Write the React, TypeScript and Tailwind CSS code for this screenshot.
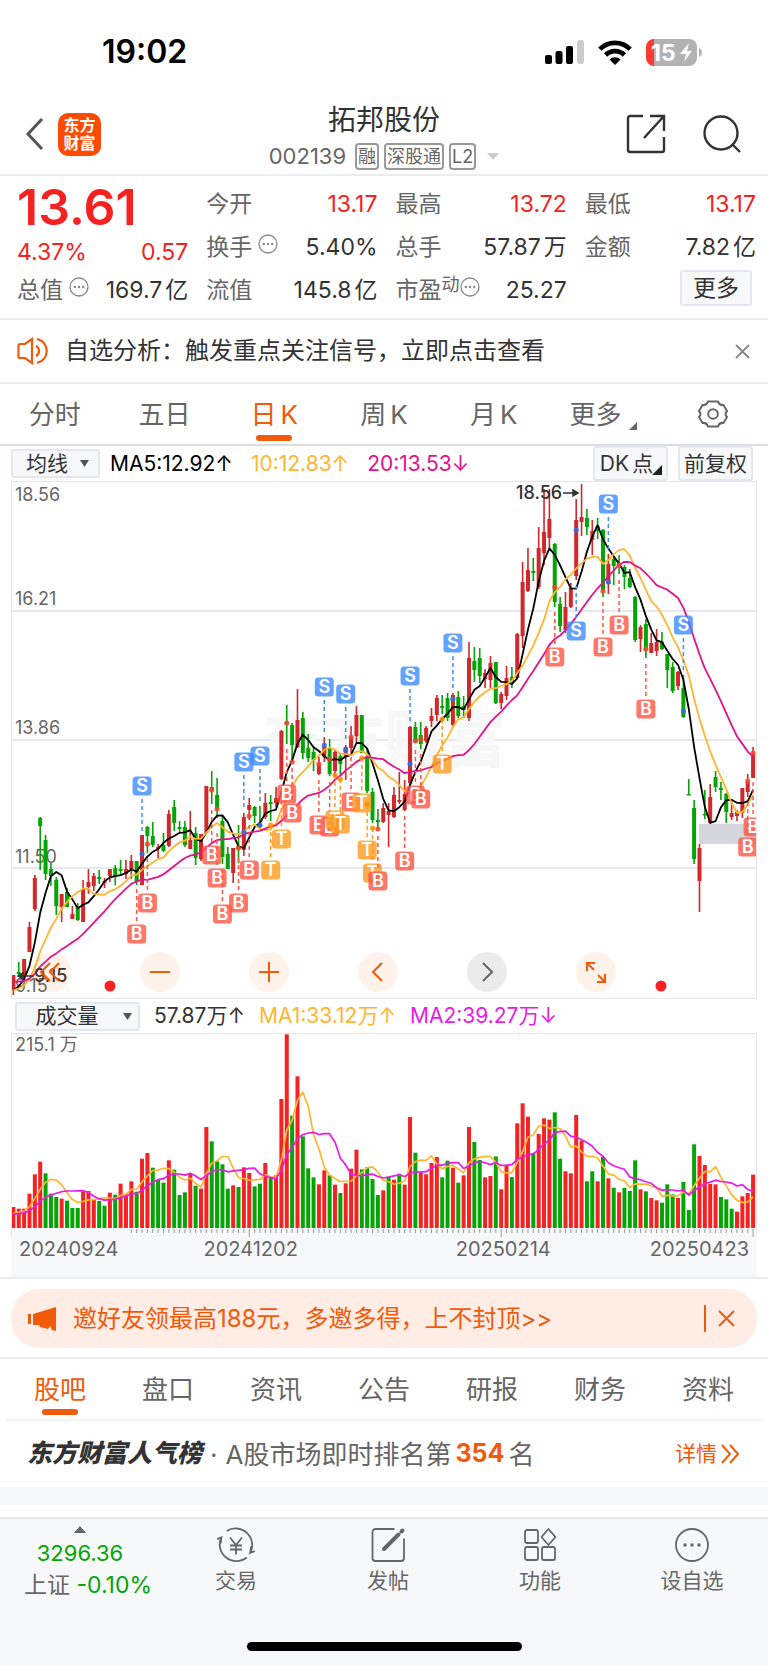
import React from 'react';

// [high, low, bodyTop, bodyBottom], negative high marks a falling day
const CANDLES: [number, number, number, number][] = [
  [493, 513, 493, 508], [-480, 494, 490, 492], [477, 498, 477, 494], [440, 470, 445, 470], [393, 429, 396, 427],
  [-335, 388, 336, 344], [-353, 398, 358, 392], [-381, 404, 387, 394], [-395, 433, 398, 424], [412, 440, 412, 425],
  [-406, 425, 410, 425], [424, 437, 432, 437], [-421, 439, 425, 438], [398, 440, 407, 440], [387, 412, 400, 405],
  [391, 409, 394, 404], [-388, 402, 395, 397], [396, 406, 399, 401], [387, 400, 387, 394], [-383, 403, 386, 394],
  [-378, 393, 387, 389], [378, 397, 387, 392], [373, 397, 379, 387], [-379, 403, 379, 400], [353, 403, 353, 403],
  [-344, 371, 345, 354], [-340, 365, 354, 363], [362, 376, 365, 367], [-351, 370, 363, 369], [328, 365, 332, 364],
  [-318, 349, 325, 341], [-339, 350, 345, 347], [-339, 365, 345, 363], [329, 367, 358, 367], [-345, 383, 351, 376],
  [352, 379, 352, 377], [304, 351, 304, 351], [-289, 322, 305, 309], [-296, 336, 313, 327], [-334, 382, 339, 375],
  [-365, 387, 372, 387], [366, 401, 366, 391], [-343, 381, 364, 367], [331, 374, 335, 368], [316, 338, 323, 328],
  [-324, 341, 325, 334], [-324, 346, 342, 345], [311, 337, 321, 335], [-313, 339, 320, 322], [305, 325, 316, 321],
  [248, 298, 249, 297], [-223, 262, 240, 242], [-241, 280, 243, 263], [207, 266, 238, 265], [-230, 277, 236, 271],
  [-252, 280, 266, 276], [-264, 289, 270, 278], [275, 293, 282, 292], [255, 280, 264, 275], [-257, 294, 266, 292],
  [268, 295, 270, 289], [-271, 293, 274, 282], [263, 298, 265, 275], [244, 271, 255, 266], [224, 260, 233, 254],
  [-233, 271, 233, 271], [-266, 311, 276, 309], [-306, 341, 310, 338], [-327, 348, 338, 340], [321, 341, 326, 340],
  [321, 365, 329, 333], [305, 336, 313, 335], [290, 322, 318, 320], [298, 329, 312, 328], [244, 303, 245, 301],
  [-240, 261, 245, 260], [-240, 267, 253, 262], [244, 261, 246, 259], [226, 245, 234, 239], [213, 239, 216, 233],
  [-213, 232, 224, 226], [-211, 239, 216, 236], [211, 244, 213, 243], [-209, 236, 215, 234], [-214, 236, 224, 228],
  [160, 239, 176, 236], [-165, 200, 179, 188], [-166, 201, 176, 194], [187, 206, 191, 197], [174, 206, 181, 198],
  [-180, 222, 180, 221], [210, 227, 212, 221], [184, 218, 196, 214], [-185, 206, 195, 201], [151, 197, 152, 196],
  [80, 166, 100, 154], [66, 110, 88, 109], [-76, 99, 89, 91], [45, 107, 66, 105], [7, 83, 50, 71],
  [7, 66, 37, 56], [-61, 125, 62, 120], [-115, 150, 122, 144], [110, 151, 125, 148], [101, 126, 106, 125],
  [17, 98, 38, 94], [2, 54, 35, 40], [-27, 53, 36, 45], [38, 73, 49, 58], [-36, 57, 44, 49],
  [-47, 115, 48, 108], [72, 112, 82, 102], [-75, 103, 77, 84], [-73, 92, 81, 85], [-83, 107, 85, 95],
  [-87, 106, 96, 105], [-114, 160, 115, 158], [143, 170, 145, 157], [-137, 176, 142, 168], [151, 171, 161, 171],
  [147, 174, 160, 169], [-150, 168, 160, 167], [-172, 206, 172, 188], [-180, 211, 185, 209], [189, 208, 190, 204],
  [-193, 236, 206, 235], [-297, 313, 312, 313], [-318, 382, 326, 377], [362, 430, 366, 399], [-308, 337, 332, 333],
  [302, 342, 315, 341], [-289, 310, 295, 305], [-300, 318, 306, 308], [-311, 341, 312, 330], [318, 338, 331, 335],
  [328, 339, 330, 334], [306, 336, 306, 331], [292, 315, 300, 310], [265, 296, 272, 296],
];

// negative = green bar
const VOLUMES = [
  63, 58, 58, 103, 161, 199, -164, -103, -93, 88, -82, -60, -60, 109, 111, 85, -81, -67, 106, -100,
  133, 101, 140, -109, 208, 225, -181, -145, -136, 203, -175, -99, -107, 163, -127, 118, 303, -260, -200, -191,
  -118, 128, -123, 182, 165, -125, -133, 195, -150, 158, 387, 581, -337, 455, -275, -179, -152, 131, 173, -158,
  130, -105, 134, 178, 235, -176, -182, -147, -99, 113, -154, 145, -163, 130, 333, -226, 165, 161, 195, 213,
  -152, -202, 181, -136, 158, 303, -258, -204, 152, 156, -215, 116, 187, -153, 314, 374, 334, -224, 282, 329,
  325, -347, -208, 170, 164, 339, 262, -140, -170, 140, -213, 149, -121, 107, -120, -111, -203, 116, -110, 90,
  83, -76, -131, -101, 90, -138, -54, -251, 216, 189, 132, 131, -93, -86, -58, 49, 95, 105, 160,
];

type MarkerKind = 'S' | 'B' | 'T';

// [kind, candle index, marker y, dot y]
const MARKERS: [MarkerKind, number, number, number?][] = [
  ['S', 24, 304, 372], ['B', 23, 452], ['B', 25, 421, 362], ['B', 37, 373, 308], ['B', 38, 396, 327],
  ['B', 39, 432], ['B', 42, 421, 366], ['S', 43, 280, 350], ['B', 44, 388, 334], ['S', 46, 274, 343],
  ['T', 48, 388, 343], ['T', 50, 357], ['B', 51, 312, 241], ['B', 52, 331, 280], ['B', 57, 343, 282],
  ['S', 58, 205, 263], ['B', 59, 345, 277], ['T', 60, 338, 293], ['T', 61, 342, 297], ['S', 62, 212, 268],
  ['B', 63, 320, 255], ['T', 65, 321, 276], ['T', 66, 368, 322], ['T', 67, 391, 346], ['B', 68, 399, 347],
  ['B', 73, 379], ['S', 74, 194, 282], ['B', 75, 313, 259], ['B', 76, 317, 257], ['T', 80, 282, 237],
  ['S', 82, 161, 217], ['B', 101, 175, 105], ['S', 105, 149, 48], ['B', 110, 165, 109], ['S', 111, 22, 100],
  ['B', 113, 143, 83], ['B', 118, 227, 167], ['S', 125, 143, 229], ['B', 138, 345, 271], ['B', 137, 365, 299],
];

const MARKER_COLORS: Record<MarkerKind, { box: string; dot: string }> = {
  S: { box: '#3d8bff', dot: '#2f6fe8' },
  B: { box: '#ff5542', dot: '#f0492b' },
  T: { box: '#ff9a1f', dot: '#ff8a00' },
};

const RED = '#d0282b';
const GREEN = '#05a405';
const STEP = 5.36;
const xAt = (i: number) => 13.4 + i * STEP;

const average = (values: number[], span: number, history: number[]) => {
  const all = [...history, ...values];
  return values.map((_, i) => {
    const end = i + history.length + 1;
    return all.slice(end - span, end).reduce((a, b) => a + b, 0) / span;
  });
};

const toPoints = (ys: number[]) => ys.map((y, i) => `${xAt(i).toFixed(1)},${y.toFixed(1)}`).join(' ');

const closes = CANDLES.map(([high, , top, bottom]) => (high < 0 ? bottom : top));
const earlierCloses = [...Array(10).fill(491), ...Array(5).fill(508), ...Array(4).fill(512)];
const volumeTops = VOLUMES.map((v) => 194 - Math.abs(v) / 3);
const earlierVolumes = Array(9).fill(181);

const PriceChart = () => (
  <svg viewBox="12 0 744 516" className="block w-full" role="img" aria-label="日K">
    {[129, 258, 386].map((y) => (
      <line key={y} x1="11" x2="757" y1={y} y2={y} stroke="#e6e9f0" strokeWidth="2" />
    ))}
    <text x="262" y="280" fontSize="61" fontWeight="900" fill="#f7f7f8">东方财富</text>
    <rect x="699" y="342" width="58" height="20" fill="#d3d6db" />
    <g fontSize="18" fill="#666">
      <text x="15" y="19">18.56</text>
      <text x="15" y="123">16.21</text>
      <text x="15" y="252">13.86</text>
      <text x="15" y="381">11.50</text>
      <text x="15" y="510">9.15</text>
    </g>
    {CANDLES.map(([high, low, top, bottom], i) => (
      <g key={i} fill={high < 0 ? GREEN : RED}>
        <rect x={xAt(i) - 0.8} y={Math.abs(high)} width="1.6" height={low - Math.abs(high)} />
        <rect x={xAt(i) - 2} y={top} width="4" height={Math.max(bottom - top, 1.5)} />
      </g>
    ))}
    <g fill="none" strokeWidth="1.8" strokeLinejoin="round">
      <polyline points={toPoints(average(closes, 5, earlierCloses))} stroke="#000" />
      <polyline points={toPoints(average(closes, 10, earlierCloses))} stroke="#ffb62e" />
      <polyline points={toPoints(average(closes, 20, earlierCloses))} stroke="#e3118c" />
    </g>
    {MARKERS.map(([kind, i, y, dot]) => {
      const color = MARKER_COLORS[kind];
      const dir = dot && dot > y ? 1 : -1;
      return (
        <g key={`${kind}${i}`}>
          <line x1={xAt(i)} x2={xAt(i)} y1={y + dir * 13} y2={y + dir * 45} stroke={color.box} strokeWidth="1.5" strokeDasharray="4 3" />
          {dot && <circle cx={xAt(i)} cy={dot} r="2.6" fill={color.dot} fillOpacity="0.85" />}
          <rect x={xAt(i) - 9.5} y={y - 9.5} width="19" height="19" rx="3.5" fill={color.box} fillOpacity="0.8" />
          <text x={xAt(i)} y={y + 6} textAnchor="middle" fontSize="18" fontWeight="600" fill="#fff">{kind}</text>
        </g>
      );
    })}
    <g fontSize="18" fontWeight="500" fill="#333">
      <text x="516" y="17">18.56</text>
      <text x="34" y="500">9.15</text>
    </g>
    <g stroke="#333" strokeWidth="1.5" fill="#333">
      <path d="M563 11h11M573 8l5 3-5 3zM34 494H22M23 491l-5 3 5 3z" />
    </g>
    <circle cx="110" cy="504" r="5.5" fill="#f62222" />
    <circle cx="661" cy="504" r="5.5" fill="#f62222" />
  </svg>
);

const VolumeChart = () => (
  <svg viewBox="12 0 744 203" className="block w-full" role="img" aria-label="成交量">
    <rect x="11" y="194" width="746" height="9" fill="#f7f8fa" />
    <text x="15" y="17" fontSize="18" fill="#666">215.1 万</text>
    {VOLUMES.map((v, i) => (
      <rect key={i} x={xAt(i) - 2} y={volumeTops[i]} width="4" height={194 - volumeTops[i]} fill={v < 0 ? GREEN : '#f62222'} />
    ))}
    <g stroke="#999" strokeWidth="1">
      {VOLUMES.map((_, i) => {
        if (i < 22) return null;
        return <line key={i} x1={xAt(i)} x2={xAt(i)} y1="195" y2={[44, 91, 138].includes(i) ? 203 : 199} />;
      })}
    </g>
    <g fill="none" strokeWidth="1.7" strokeLinejoin="round">
      <polyline points={toPoints(average(volumeTops, 5, earlierVolumes))} stroke="#ffb62e" />
      <polyline points={toPoints(average(volumeTops, 10, earlierVolumes))} stroke="#e81be8" />
    </g>
  </svg>
);

const StatusBar = () => (
  <div className="flex h-[90px] items-center justify-between pt-3.5 pr-[66px] pl-[102px]">
    <span className="text-[32px] leading-9 font-semibold text-black">19:02</span>
    <div className="flex items-center gap-3.5">
      <svg width="39" height="24" viewBox="0 0 39 24">
        <rect x="0" y="15" width="7" height="9" rx="2" />
        <rect x="10.500" y="11" width="7" height="13" rx="2" />
        <rect x="21" y="6" width="7" height="18" rx="2" />
        <rect x="32" y="0" width="7" height="24" rx="2" fill="#ccc" />
      </svg>
      <svg width="34" height="25" viewBox="0 0 34 25" fill="none" stroke="#000" strokeWidth="4.600">
        <path d="M1.800 9.200a21.500 21.500 0 0 1 30.400 0M7.600 15a13.300 13.300 0 0 1 18.800 0" />
        <path d="M17 25l-5.500-5.600a7.800 7.800 0 0 1 11 0z" fill="#000" stroke="none" />
      </svg>
      <svg width="56" height="27" viewBox="0 0 56 27">
        <path d="M8 0h35a8 8 0 0 1 8 8v11a8 8 0 0 1-8 8H8z" fill="#b3b3b3" />
        <path d="M8 0v27a8 8 0 0 1-8-8V8a8 8 0 0 1 8-8z" fill="#ff3b30" />
        <path d="M53 9c4 1 4 8 0 9z" fill="#b3b3b3" />
        <text x="5" y="22" fontSize="23" fontWeight="700" fill="#fff">15</text>
        <path d="M43 4L34 15h6l-2 8 8-11h-5z" fill="#fff" />
      </svg>
    </div>
  </div>
);

const Header = () => (
  <header className="relative flex h-[86px] items-center justify-between border-b-2 border-[#ececee] pt-1 pr-[27px] pl-[25px]">
    <div className="flex items-center gap-3.5">
      <button type="button" aria-label="返回">
        <svg width="19" height="32" viewBox="0 0 19 32" fill="none" stroke="#555" strokeWidth="3">
          <path d="M17 1L3 16l14 15" />
        </svg>
      </button>
      <a href="#home" className="flex h-[43px] w-[43px] flex-col items-center justify-center rounded-[10px] bg-[#ff4a00] text-[16px] leading-[18px] font-bold text-white">
        <span>东方</span>
        <span>财富</span>
      </a>
    </div>
    <div className="absolute inset-x-40 top-[10px] flex flex-col items-center">
      <h1 className="text-[28px] leading-10 text-[#333]">拓邦股份</h1>
      <div className="flex items-center gap-[5px] text-[22px] leading-8 text-[#666]">
        <span className="mr-1">002139</span>
        {['融', '深股通', 'L2'].map((tag) => (
          <span key={tag} className="h-[27px] rounded-[4px] border-2 border-[#999] px-px text-[18px] leading-6">{tag}</span>
        ))}
        <svg width="12" height="7" className="ml-1.5"><path d="M0 0h12L6 7z" fill="#ccc" /></svg>
      </div>
    </div>
    <div className="flex items-center gap-[37px]">
      <button type="button" aria-label="分享">
        <svg width="40" height="40" viewBox="0 0 40 40" fill="none" stroke="#333" strokeWidth="2.400">
          <path d="M17 2H4a2 2 0 0 0-2 2v32a2 2 0 0 0 2 2h32a2 2 0 0 0 2-2V23M24 2h14v15M38 2L18 24" />
        </svg>
      </button>
      <button type="button" aria-label="搜索">
        <svg width="38" height="40" viewBox="0 0 38 40" fill="none" stroke="#333" strokeWidth="2.400">
          <circle cx="18" cy="19" r="16.500" />
          <path d="M29 30l8 8" />
        </svg>
      </button>
    </div>
  </header>
);

const InfoDots = () => (
  <svg width="20" height="20" viewBox="0 0 20 20" className="mb-2 block" fill="#888">
    <circle cx="10" cy="10" r="9" fill="none" stroke="#888" strokeWidth="1.300" />
    <circle cx="5.800" cy="10" r="1.200" />
    <circle cx="10" cy="10" r="1.200" />
    <circle cx="14.200" cy="10" r="1.200" />
  </svg>
);

interface StatProps {
  label: string;
  value: string;
  unit?: string;
  up?: boolean;
  info?: boolean;
  sup?: string;
}

const Stat: React.FC<StatProps> = ({ label, value, unit, up, info, sup }) => (
  <div className="flex h-[43px] items-center justify-between">
    <dt className="flex items-center text-[#666]">
      {label}
      {sup && <span className="mb-3 text-[18px] leading-5">{sup}</span>}
      {info && <span className={sup ? '' : 'ml-1.5'}><InfoDots /></span>}
    </dt>
    <dd className={up ? 'text-[#f62222]' : 'text-[#333]'}>
      {value}
      {unit && <span className="ml-[3px]">{unit}</span>}
    </dd>
  </div>
);

const Quote = () => (
  <section className="grid h-[144px] grid-cols-4 gap-x-[18px] border-b-2 border-[#ececee] pt-[7px] pr-3 pl-[17px] text-[23px] whitespace-nowrap">
    <div>
      <div className="h-12 text-[50px] leading-[48px] font-semibold text-[#f62222]">13.61</div>
      <div className="flex h-[38px] items-end justify-between text-[#f62222]">
        <span>4.37%</span>
        <span>0.57</span>
      </div>
      <dl><Stat label="总值" value="169.7" unit="亿" info /></dl>
    </div>
    <dl>
      <Stat label="今开" value="13.17" up />
      <Stat label="换手" value="5.40%" info />
      <Stat label="流值" value="145.8" unit="亿" />
    </dl>
    <dl>
      <Stat label="最高" value="13.72" up />
      <Stat label="总手" value="57.87" unit="万" />
      <Stat label="市盈" value="25.27" sup="动" info />
    </dl>
    <div>
      <dl>
        <Stat label="最低" value="13.17" up />
        <Stat label="金额" value="7.82" unit="亿" />
      </dl>
      <button type="button" className="mt-px mr-1 ml-auto block h-9 w-[72px] rounded-[3px] border-2 border-[#e4e7ee] bg-[#f7f8fa] leading-8 text-[#333]">更多</button>
    </div>
  </section>
);

const Alert = () => (
  <div className="flex h-16 items-center border-b-2 border-[#ececee] pr-[18px] pl-[17px]">
    <svg width="32" height="28" viewBox="0 0 32 28" fill="none" stroke="#f05a0a" strokeWidth="2.200">
      <path d="M15 2v24l-7-5H3a1.500 1.500 0 0 1-1.500-1.500v-11A1.500 1.500 0 0 1 3 7h5zM19 9c4 2 4 8 0 10M20 2c13 3 13 21 0 24" />
    </svg>
    <a href="#signal" className="ml-4 text-[24px] text-[#333]">自选分析：触发重点关注信号，立即点击查看</a>
    <button type="button" aria-label="关闭" className="ml-auto">
      <svg width="15" height="15" viewBox="0 0 15 15" stroke="#888" strokeWidth="1.800"><path d="M1 1l13 13M14 1L1 14" /></svg>
    </button>
  </div>
);

const PERIODS = ['分时', '五日', '日K', '周K', '月K', '更多'];

const PeriodTabs = () => (
  <nav className="flex h-[62px] items-center border-b-2 border-[#dcdde1] text-[26px] text-[#666]">
    {PERIODS.map((name) => (
      <button key={name} type="button" className={`relative h-full flex-1 ${name === '日K' ? 'text-[#f05a0a]' : ''}`}>
        {name === '更多' ? (
          <span className="inline-flex items-end gap-2">
            更多
            <svg width="8" height="8" className="mb-1"><path d="M8 0v8H0z" fill="#666" /></svg>
          </span>
        ) : (
          <span className="inline-flex gap-1">
            <span>{name.replace('K', '')}</span>
            {name.endsWith('K') && <span>K</span>}
          </span>
        )}
        {name === '日K' && <span className="absolute inset-x-0 bottom-[3px] mx-auto h-[6px] w-9 rounded-full bg-[#f05a0a]" />}
      </button>
    ))}
    <button type="button" aria-label="设置" className="flex h-full flex-1 items-center justify-center">
      <svg width="30" height="28" viewBox="0 0 30 28" fill="none" stroke="#666" strokeWidth="2">
        <path d="M10 1.500h10c1 3 3 4 5.500 3.500L29 11c-2 2-2 4 0 6l-3.500 6c-2.500-.5-4.500.5-5.500 3.500H10c-1-3-3-4-5.500-3.500L1 17c2-2 2-4 0-6l3.500-6C7 5.500 9 4.500 10 1.500z" />
        <circle cx="15" cy="14" r="4.800" />
      </svg>
    </button>
  </nav>
);

const CHIP = 'flex items-center justify-center rounded-[3px] border-2 border-[#e4e7ee] bg-[#f7f8fa] text-[#333]';

const Controls = () => (
  <div className="absolute inset-x-[19px] bottom-[6px] flex gap-[69px]">
    {[
      { label: '最早', icon: 'M19 11l-9 9 9 9M28 11l-9 9 9 9' },
      { label: '缩小', icon: 'M10 20h20' },
      { label: '放大', icon: 'M10 20h20M20 10v20' },
      { label: '向左', icon: 'M24 11l-9 9 9 9' },
      { label: '向右', icon: 'M16 11l9 9-9 9' },
      { label: '全屏', icon: 'M11 19v-8h8M11 11l7 7M29 22v8h-8M29 30l-7-7' },
    ].map(({ label, icon }) => (
      <button key={label} type="button" aria-label={label} className={`h-10 w-10 rounded-full ${label === '向右' ? 'bg-black/8 text-[#666]' : 'bg-[#ff5a00]/8 text-[#f05a0a]'}`}>
        <svg width="40" height="40" fill="none" stroke="currentColor" strokeWidth="2"><path d={icon} /></svg>
      </button>
    ))}
  </div>
);

const ChartPanel = () => (
  <section className="px-[11px] text-[21px] whitespace-nowrap">
    <div className="flex h-[35px] items-center">
      <button type="button" className={`${CHIP} h-[29px] w-[89px] gap-3 pl-1`}>
        均线
        <svg width="9" height="7"><path d="M0 0h9L4.500 7z" fill="#555" /></svg>
      </button>
      <span className="ml-2.5 text-black">MA5:12.92↑</span>
      <span className="ml-[18px] text-[#ffb62e]">10:12.83↑</span>
      <span className="ml-[18px] text-[#e3118c]">20:13.53↓</span>
      <button type="button" className={`${CHIP} relative ml-auto h-[35px] w-[75px] gap-[3px] pr-2`}>
        <span>DK</span>
        <span>点</span>
        <svg width="10" height="10" className="absolute right-1 bottom-1"><path d="M10 0v10H0z" fill="#222" /></svg>
      </button>
      <button type="button" className={`${CHIP} mr-1 ml-2.5 h-[35px] w-[75px]`}>前复权</button>
    </div>
    <div className="relative border border-[#e4e6ea]">
      <PriceChart />
      <Controls />
    </div>
    <div className="flex h-[34px] items-center">
      <button type="button" className={`${CHIP} ml-1 h-[29px] w-[125px] gap-6 pl-3`}>
        成交量
        <svg width="9" height="7"><path d="M0 0h9L4.500 7z" fill="#555" /></svg>
      </button>
      <span className="ml-3.5 text-[#333]">57.87万↑</span>
      <span className="ml-3.5 text-[#ffb62e]">MA1:33.12万↑</span>
      <span className="ml-3.5 text-[#e81be8]">MA2:39.27万↓</span>
    </div>
    <div className="border border-b-0 border-[#e4e6ea]">
      <VolumeChart />
    </div>
    <div className="flex h-10 bg-[#f7f8fa] px-2 text-[20px] leading-6 text-[#666]">
      <span>20240924</span>
      <span className="ml-[85px]">20241202</span>
      <span className="ml-auto">20250214</span>
      <span className="ml-[99px]">20250423</span>
    </div>
  </section>
);

const Promo = () => (
  <div className="border-y-2 border-[#ececee] px-[11px] pt-2.5 pb-[9px] text-[#f05a0a]">
    <div className="flex h-[59px] items-center rounded-[28px] bg-[#ffede5] pr-[22px] pl-[17px]">
      <svg width="29" height="26" viewBox="0 0 29 26" fill="#f05a0a">
        <path d="M0 8h3v10H0zM5 8L28 1v24l-4-1-2-4-2 3-8-2-1-2H5z" />
      </svg>
      <a href="#invite" className="ml-4 text-[24px]">邀好友领最高188元，多邀多得，上不封顶&gt;&gt;</a>
      <span className="ml-auto h-[27px] w-[2px] bg-[#f05a0a]" />
      <button type="button" aria-label="关闭" className="ml-3">
        <svg width="17" height="17" viewBox="0 0 17 17" stroke="#f05a0a" strokeWidth="2"><path d="M1 1l15 15M16 1L1 16" /></svg>
      </button>
    </div>
  </div>
);

const SECTIONS = ['股吧', '盘口', '资讯', '公告', '研报', '财务', '资料'];

const SectionTabs = () => (
  <nav className="mx-1.5 flex h-[62px] items-center border-b-2 border-[#f2f2f4] text-[26px] text-[#666]">
    {SECTIONS.map((name, i) => (
      <button key={name} type="button" className={`relative h-full flex-1 ${i === 0 ? 'text-[#f05a0a]' : ''}`}>
        {name}
        {i === 0 && <span className="absolute inset-x-0 bottom-1 mx-auto h-[6px] w-9 rounded-full bg-[#f05a0a]" />}
      </button>
    ))}
  </nav>
);

const Ranking = () => (
  <div className="flex h-[66px] items-center pr-[29px] pl-[27px] text-[26px] whitespace-nowrap text-[#666]">
    <strong className="text-[25px] font-black text-[#333] italic">东方财富人气榜</strong>
    <span className="ml-2">·</span>
    <span className="ml-2">A股市场即时排名第</span>
    <b className="mx-1 text-[25px] font-bold text-[#f05a0a]">354</b>
    <span>名</span>
    <a href="#rank" className="ml-auto flex items-center gap-1 text-[21px] text-[#f05a0a]">
      详情
      <svg width="18" height="20" viewBox="0 0 18 20" fill="none" stroke="#f05a0a" strokeWidth="2"><path d="M1 1l8 9-8 9M9 1l8 9-8 9" /></svg>
    </a>
  </div>
);

const NAV_ITEMS = [
  {
    label: '交易',
    icon: (
      <>
        <path d="M8.700 4A16.600 16.600 0 0 1 32.300 25.700l4.500-1.700M32.300 25.700l.7-6M28.700 30.500A16.600 16.600 0 0 1 3.300 10.500l-4.500 1.600M3.300 10.500l-.6 6" />
        <path d="M12 10.500l6 7.500 6-7.500M12 18.500h12M12 22.500h12M18 18v9.500" />
      </>
    ),
  },
  {
    label: '发帖',
    icon: (
      <>
        <path d="M24.500 2H5.500a3 3 0 0 0-3 3v26a3 3 0 0 0 3 3h25.500a3 3 0 0 0 3-3V11.500" />
        <path d="M14 22L28.500 7.500M31.500 4.500l1-1" strokeWidth="4" strokeLinecap="round" />
      </>
    ),
  },
  {
    label: '功能',
    icon: (
      <>
        <rect x="3" y="3" width="13" height="13" rx="2" />
        <rect x="3" y="20" width="13" height="13" rx="2" />
        <rect x="20" y="20" width="13" height="13" rx="2" />
        <path d="M26.500 2l7 8-7 8-7-8z" strokeLinejoin="round" />
      </>
    ),
  },
  {
    label: '设自选',
    icon: (
      <>
        <circle cx="18" cy="18" r="16" />
        <path d="M9.500 18h3M16.500 18h3M23.500 18h3" strokeWidth="3" />
      </>
    ),
  },
];

const BottomNav = () => (
  <footer className="border-t-2 border-[#e4e6ea] bg-[#f7f8fa]">
    <div className="flex h-[100px] text-[21px] text-[#666]">
      <a href="#index" className="flex w-40 flex-col items-center text-[22px] leading-8 whitespace-nowrap">
        <svg width="12" height="7" className="mt-[7px] mb-1"><path d="M0 7h12L6 0z" fill="#666" /></svg>
        <span className="text-[#05a405]">3296.36</span>
        <span className="pl-4 text-[23px]">上证 <span className="text-[#05a405]">-0.10%</span></span>
      </a>
      {NAV_ITEMS.map(({ label, icon }) => (
        <button key={label} type="button" className="flex flex-1 flex-col items-center pt-2">
          <svg width="38" height="36" viewBox="-1 0 38 36" fill="none" stroke="#666" strokeWidth="1.800">{icon}</svg>
          <span className="mt-1 leading-7">{label}</span>
        </button>
      ))}
    </div>
    <div className="flex h-[46px] items-center justify-center">
      <span className="mt-2 h-[9px] w-[275px] rounded-full bg-black" />
    </div>
  </footer>
);

export default function App() {
  return (
    <div className="min-h-screen bg-white font-[Inter,'Noto_Sans_CJK_SC',sans-serif] text-[#333]">
      <StatusBar />
      <Header />
      <Quote />
      <Alert />
      <PeriodTabs />
      <ChartPanel />
      <Promo />
      <SectionTabs />
      <Ranking />
      <div className="h-[18px] bg-[#f7f8fa]" />
      <div className="h-3" />
      <BottomNav />
    </div>
  );
}
